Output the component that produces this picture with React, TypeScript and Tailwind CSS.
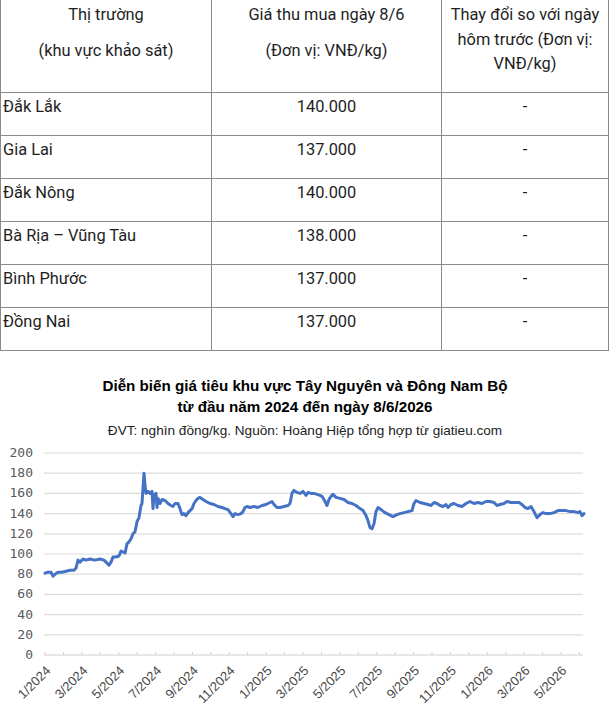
import React from "react";

const rows = [
  { name: "Đắk Lắk", price: "140.000" },
  { name: "Gia Lai", price: "137.000" },
  { name: "Đắk Nông", price: "140.000" },
  { name: "Bà Rịa – Vũng Tàu", price: "138.000" },
  { name: "Bình Phước", price: "137.000" },
  { name: "Đồng Nai", price: "137.000" },
];

// [x pixel, price in thousand VND]
const series: [number, number][] = [
  [45, 81], [48, 82], [51, 82], [53, 78], [55, 80], [58, 82], [62, 82], [66, 83], [70, 84], [74, 84],
  [76, 86], [78, 94], [80, 92], [83, 95], [86, 94], [90, 95], [95, 94], [100, 95], [104, 94], [107, 91],
  [109, 89], [111, 92], [113, 97], [116, 97], [119, 98], [121, 103], [123, 102], [125, 101], [127, 110],
  [129, 112], [131, 115], [133, 120], [135, 122], [137, 132], [139, 136], [141, 148], [142, 150],
  [143, 165], [144, 180], [145, 168], [146, 160], [148, 162], [150, 160], [152, 162], [153, 145],
  [154, 158], [156, 160], [157, 146], [158, 155], [160, 150], [162, 154], [165, 153], [168, 150],
  [171, 148], [173, 147], [175, 150], [178, 150], [180, 145], [182, 139], [184, 140], [186, 138],
  [188, 141], [190, 143], [192, 145], [194, 150], [196, 153], [198, 155], [200, 156], [203, 154],
  [206, 152], [210, 150], [214, 149], [218, 147], [222, 146], [225, 145], [228, 144], [231, 140],
  [233, 137], [235, 140], [238, 139], [241, 140], [243, 142], [245, 146], [247, 147], [250, 146],
  [254, 147], [258, 146], [262, 148], [266, 149], [270, 151], [272, 152], [274, 149], [277, 146],
  [280, 146], [284, 147], [288, 148], [290, 150], [292, 160], [294, 163], [297, 161], [300, 160],
  [303, 162], [306, 158], [308, 161], [311, 160], [314, 160], [317, 159], [320, 158], [322, 157],
  [324, 154], [327, 148], [329, 154], [331, 157], [333, 159], [336, 156], [340, 155], [344, 154],
  [348, 151], [352, 150], [356, 148], [360, 145], [363, 143], [366, 138], [368, 133], [370, 126],
  [372, 125], [374, 130], [376, 142], [378, 146], [381, 144], [385, 141], [389, 139], [393, 137],
  [397, 139], [400, 140], [404, 141], [408, 142], [412, 143], [414, 150], [416, 153], [418, 152],
  [420, 151], [424, 150], [428, 149], [431, 148], [434, 151], [437, 150], [440, 148], [443, 147],
  [446, 149], [448, 146], [451, 149], [454, 150], [458, 148], [462, 147], [466, 150], [470, 152],
  [474, 150], [478, 151], [482, 150], [486, 152], [490, 152], [494, 151], [497, 148], [500, 149],
  [504, 150], [507, 152], [511, 151], [515, 151], [519, 151], [522, 149], [525, 146], [528, 145],
  [531, 147], [534, 142], [537, 136], [540, 139], [543, 141], [546, 140], [550, 140], [554, 141],
  [558, 143], [562, 143], [566, 143], [570, 142], [574, 142], [578, 141], [580, 142], [582, 138],
  [584, 140],
];

const labels = [
  "1/2024", "3/2024", "5/2024", "7/2024", "9/2024", "11/2024", "1/2025", "3/2025",
  "5/2025", "7/2025", "9/2025", "11/2025", "1/2026", "3/2026", "5/2026",
];

const yOf = (v: number) => 211 - v * 1.01;
const MONTH = 18.43;

function PriceChart() {
  const pts = series.map(([x, v]) => `${x},${yOf(v).toFixed(1)}`).join(" ");
  const grid = Array.from({ length: 11 }, (_, i) => i * 20);
  const ticks = Array.from({ length: 30 }, (_, i) => 45 + i * MONTH);

  return (
    <svg width="610" height="274" viewBox="0 0 610 274" className="block">
      {grid.map((g) => (
        <g key={g}>
          <line
            x1="44"
            x2="583"
            y1={yOf(g)}
            y2={yOf(g)}
            stroke={g === 0 ? "#d0d0d0" : "#dcdcdc"}
            strokeWidth="1.2"
          />
          <text
            x="33"
            y={yOf(g) + 0.5}
            textAnchor="end"
            dominantBaseline="middle"
            fill="#595959"
            fontSize="13"
            fontFamily="'DejaVu Sans Mono', monospace"
          >
            {g}
          </text>
        </g>
      ))}
      {ticks.map((t, i) => (
        <line key={i} x1={t} x2={t} y1={yOf(0) - 3} y2={yOf(0)} stroke="#d0d0d0" strokeWidth="1" />
      ))}
      {labels.map((l, i) => {
        const x = 45 + i * 2 * MONTH + 4;
        const y = 225;
        return (
          <text
            key={l}
            x={x}
            y={y}
            textAnchor="end"
            dominantBaseline="middle"
            fill="#4a4a4a"
            fontSize="13"
            fontFamily="'Liberation Sans', Arial, sans-serif"
            transform={`rotate(-45 ${x} ${y})`}
          >
            {l}
          </text>
        );
      })}
      <polyline
        points={pts}
        fill="none"
        stroke="#4472c4"
        strokeWidth="3"
        strokeLinejoin="round"
        strokeLinecap="round"
      />
    </svg>
  );
}

export default function App() {
  return (
    <div className="w-[610px] h-[719px] overflow-hidden bg-white">
      {/* Price table */}
      <div className="w-[609px] border-l border-[#8a8a8a] font-['Roboto',sans-serif] text-[16.4px] text-[#1e1e1e]">
        <div className="grid grid-cols-[211px_230px_167px]">
          <div className="h-[93px] border-r border-b border-[#8a8a8a] pt-[3px] text-center leading-[24px]">
            <p>Thị trường</p>
            <p className="mt-[12px]">(khu vực khảo sát)</p>
          </div>
          <div className="h-[93px] border-r border-b border-[#8a8a8a] pt-[3px] text-center leading-[24px]">
            <p>Giá thu mua ngày 8/6</p>
            <p className="mt-[12px]">(Đơn vị: VNĐ/kg)</p>
          </div>
          <div className="h-[93px] border-r border-b border-[#8a8a8a] pt-[3px] text-center leading-[24.5px]">
            <p>Thay đổi so với ngày hôm trước (Đơn vị: VNĐ/kg)</p>
          </div>

          {rows.map((r) => (
            <React.Fragment key={r.name}>
              <div className="h-[43px] border-r border-b border-[#8a8a8a] pt-[2px] pl-[2px] leading-[24px]">
                {r.name}
              </div>
              <div className="h-[43px] border-r border-b border-[#8a8a8a] pt-[2px] text-center leading-[24px]">
                {r.price}
              </div>
              <div className="h-[43px] border-r border-b border-[#8a8a8a] pt-[2px] text-center leading-[24px]">
                -
              </div>
            </React.Fragment>
          ))}
        </div>
      </div>

      {/* Chart */}
      <div className="pt-[24px] text-center font-['Liberation_Sans',Arial,sans-serif] text-black">
        <h2 className="text-[15.2px] font-bold leading-[21px]">
          Diễn biến giá tiêu khu vực Tây Nguyên và Đông Nam Bộ
          <br />
          từ đầu năm 2024 đến ngày 8/6/2026
        </h2>
        <p className="mt-[5px] text-[13.6px] leading-[18px] text-[#222]">
          ĐVT: nghìn đồng/kg. Nguồn: Hoàng Hiệp tổng hợp từ giatieu.com
        </p>
      </div>
      <div className="mt-[4px]">
        <PriceChart />
      </div>
    </div>
  );
}
